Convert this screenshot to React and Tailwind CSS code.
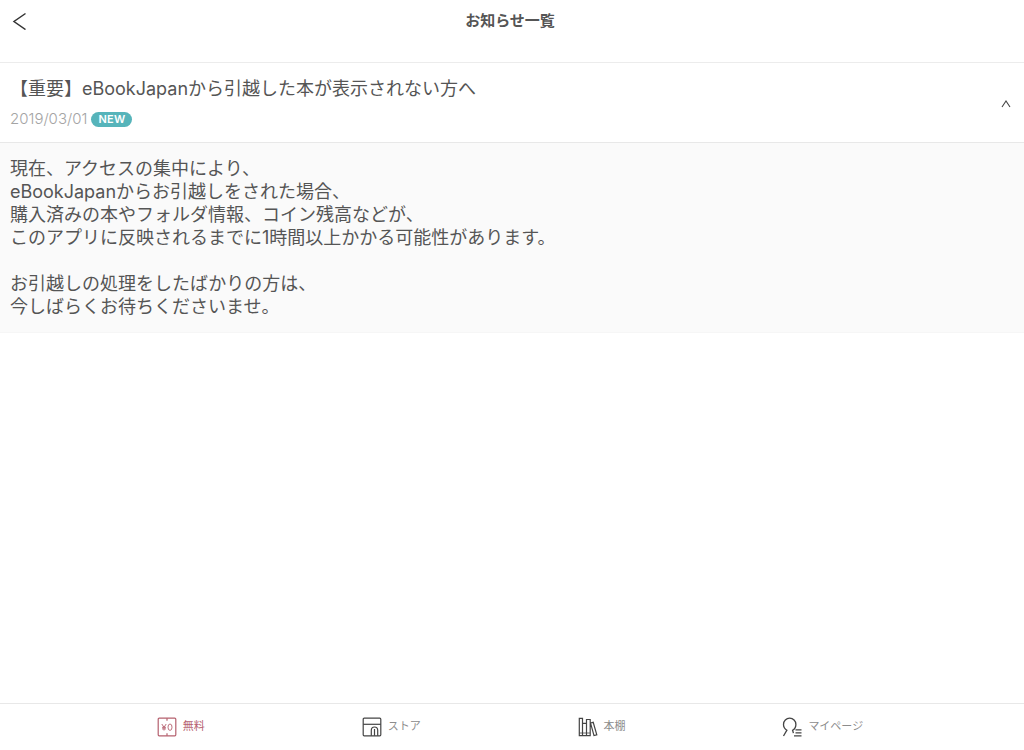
import React from 'react';

const bodyLines = [
  '現在、アクセスの集中により、',
  'eBookJapanからお引越しをされた場合、',
  '購入済みの本やフォルダ情報、コイン残高などが、',
  'このアプリに反映されるまでに1時間以上かかる可能性があります。',
  '',
  'お引越しの処理をしたばかりの方は、',
  '今しばらくお待ちくださいませ。',
];

function FreeIcon() {
  return (
    <svg className="h-5 w-5" viewBox="0 0 20 20" fill="none" stroke="currentColor" aria-hidden="true">
      <rect x="1.2" y="1.2" width="17.600" height="17.600" rx="1" strokeWidth="1.2" />
      <path d="M10 1.200v2.600M10 16.200v2.600" strokeWidth="1.2" />
      <path d="M4.800 7l2.200 3.300L9.200 7M7 10.300V13.500M5 10.300h4M5 11.900h4" strokeWidth="0.9" />
      <ellipse cx="13" cy="10.200" rx="2" ry="3.200" strokeWidth="0.9" />
    </svg>
  );
}

function StoreIcon() {
  return (
    <svg className="h-5 w-5" viewBox="0 0 20 20" fill="none" stroke="currentColor" strokeWidth="1.2" aria-hidden="true">
      <rect x="1.2" y="1.200" width="17.600" height="17.600" rx="1" />
      <path d="M1.200 7.300h17.600" />
      <path d="M9.300 18.800v-5.600a3.200 3.200 0 0 1 6.400 0v5.600M12.500 12v6.800" />
    </svg>
  );
}

function ShelfIcon() {
  return (
    <svg className="h-5 w-5" viewBox="0 0 20 20" fill="none" stroke="currentColor" strokeWidth="1.200" aria-hidden="true">
      <path d="M1.300 1.300h3.200v17.400h-3.200zM4.500 6.300h4v12.400h-4zM8.500 2.500h3.700v16.200h-3.700zM12.500 6l2.700-.7 3.600 12.500-2.800.8z" />
      <path d="M1.300 16h3.200M4.500 16h4M8.500 16h3.700" strokeWidth="0.8" />
    </svg>
  );
}

function UserIcon() {
  return (
    <svg className="h-5 w-5" viewBox="0 0 20 20" fill="none" stroke="currentColor" strokeWidth="1.300" aria-hidden="true">
      <path d="M1.500 19l3.400-5.800C3 12 1.500 9.900 1.500 7.400a6.200 6.200 0 0 1 12.400 0c0 2.500-1.300 4.600-3.300 5.800l.8 3" />
      <path d="M13.500 12.800h6M13.500 15.800h6M12 18.800h7.500" />
    </svg>
  );
}

const tabs = [
  { label: '無料', Icon: FreeIcon, icon: 'text-[#b5606e]', text: 'text-[#b5606e]' },
  { label: 'ストア', Icon: StoreIcon, icon: 'text-[#444444]', text: 'text-[#8c8c8c]' },
  { label: '本棚', Icon: ShelfIcon, icon: 'text-[#444444]', text: 'text-[#8c8c8c]' },
  { label: 'マイページ', Icon: UserIcon, icon: 'text-[#444444]', text: 'text-[#8c8c8c]' },
];

export default function App() {
  return (
    <div lang="ja" className="flex min-h-screen flex-col bg-white font-['Inter','Noto_Sans_CJK_JP',sans-serif] text-[#555555]">
      <header className="grid h-[63px] grid-cols-[1fr_auto_1fr] items-start border-b border-[#ececec] pr-1">
        <button type="button" aria-label="戻る" className="flex h-[42px] w-10 items-center pl-3">
          <svg className="h-[18px] w-[14px] text-[#333333]" viewBox="0 0 14 18" fill="none" stroke="currentColor" strokeWidth="1.500" aria-hidden="true">
            <path d="M13.500 1.500L2 9.500l11.500 8" />
          </svg>
        </button>
        <h1 className="text-[15px] leading-[42px] font-bold">お知らせ一覧</h1>
      </header>

      <main className="flex-1">
        <article>
          <h2>
            <button
              type="button"
              aria-expanded="true"
              aria-controls="notice-body"
              className="flex w-full items-center justify-between border-b border-[#e8e8e8] pt-[13px] pr-3 pb-[11px] pl-[10px] text-left"
            >
              <span className="flex flex-col gap-[5px]">
                <span className="text-lg leading-[26px]">【重要】eBookJapanから引越した本が表示されない方へ</span>
                <span className="flex items-center gap-1">
                  <time dateTime="2019-03-01" className="text-[15px] leading-6 font-light text-[#a4a4a4]">2019/03/01</time>
                  <span className="rounded-full bg-[#56b4ba] px-[7px] text-[11px] leading-[15px] font-semibold tracking-wide text-white">NEW</span>
                </span>
              </span>
              <svg className="h-3 w-3 text-[#444444]" viewBox="0 0 12 12" fill="none" stroke="currentColor" strokeWidth="1.100" aria-hidden="true">
                <path d="M2 9l4-6 4 6" />
              </svg>
            </button>
          </h2>
          <div id="notice-body" className="border-b border-[#f6f6f6] bg-[#fafafa] px-[10px] py-[14px] text-lg leading-[23px]">
            {bodyLines.map((line, i) => (
              <p key={i} className="min-h-[23px]">{line}</p>
            ))}
          </div>
        </article>
      </main>

      <nav className="flex h-[47px] items-center justify-evenly border-t border-[#e8e8e8] pr-1">
        {tabs.map(({ label, Icon, icon, text }) => (
          <a key={label} href="#" className="flex items-start gap-[6px]">
            <span className={icon}><Icon /></span>
            <span className={`text-[11px] leading-[18px] ${text}`}>{label}</span>
          </a>
        ))}
      </nav>
    </div>
  );
}
